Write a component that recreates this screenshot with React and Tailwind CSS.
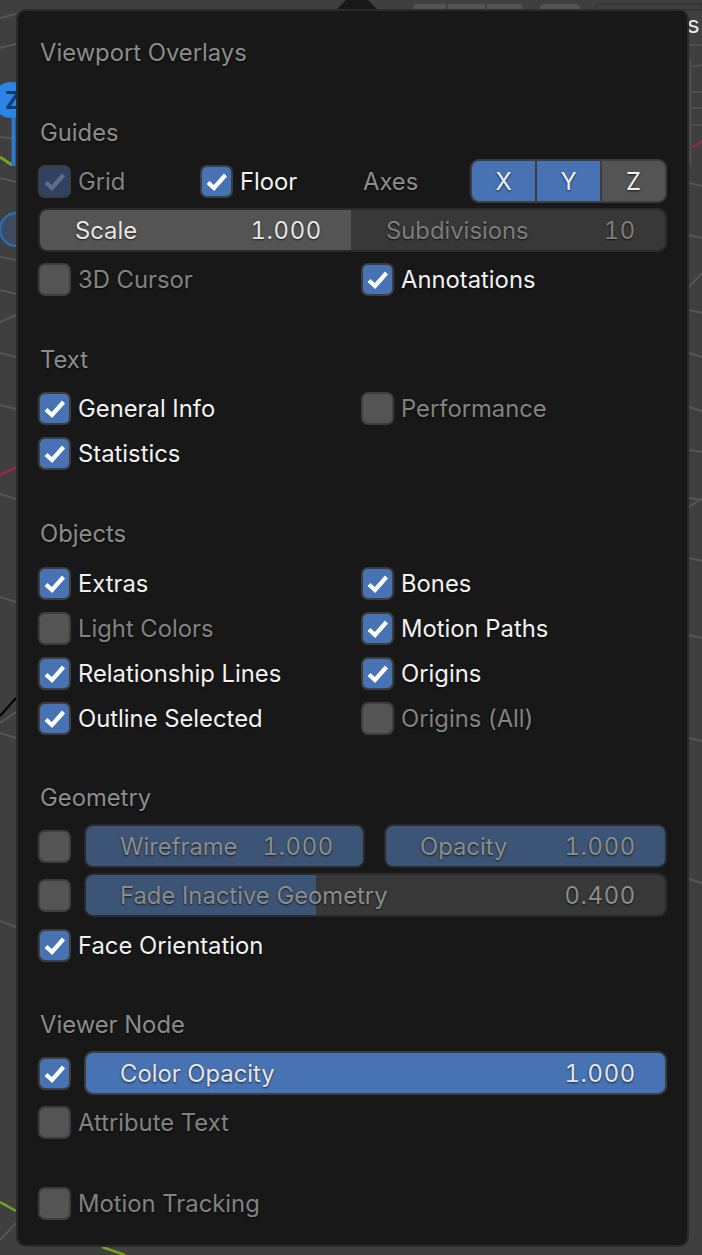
import React from 'react';

const CheckBox = ({ on, dim }) => (
  <div className={`flex h-[33px] w-[33px] shrink-0 items-center justify-center rounded-[7px] border-2 border-[#3d3d3d] ${on ? (dim ? 'bg-[#2f4263]' : 'bg-[#4772b3]') : 'bg-[#545454]'}`}>
    {on && (
      <svg width="29" height="29" viewBox="0 0 29 29" fill="none">
        <path d="M6 15.5 L12 21 L23.5 8" stroke={dim ? '#5f6f87' : '#ffffff'} strokeWidth="4.2" />
      </svg>
    )}
  </div>
);

const Check = ({ label, on, dim, className = '' }) => (
  <div className={`flex h-[34px] items-center gap-[7px] ${className}`}>
    <CheckBox on={on} dim={dim} />
    <span className={`mt-[2px] whitespace-nowrap text-[23.8px] [text-shadow:0_1px_2px_rgba(0,0,0,0.7)] ${on && !dim ? 'text-[#f2f2f2]' : 'text-[#828282]'}`}>{label}</span>
  </div>
);

const Heading = ({ children, className = '' }) => (
  <div className={`flex h-[34px] items-center pl-[2px] text-[23.8px] text-[#8c8c8c] [text-shadow:0_1px_2px_rgba(0,0,0,0.7)] ${className}`}>{children}</div>
);

const CheckPair = ({ left, right, className = '' }) => (
  <div className={`grid grid-cols-[323px_1fr] ${className}`}>
    <Check {...left} />
    {right ? <Check {...right} /> : <div />}
  </div>
);

const Slider = ({ label, value, fill, active, className = '' }) => (
  <div className={`relative h-[44px] overflow-hidden rounded-[9px] border-2 ${active ? 'border-[#3d3d3d]' : 'border-[#2a2a2a]'} bg-[#383838] ${className}`}>
    <div className={`absolute inset-y-0 left-0 ${active ? 'bg-[#4772b3]' : 'bg-[#3c5476]'}`} style={{ width: fill }} />
    <div className={`relative flex h-full items-center justify-between pl-[34px] pr-[29px] pt-[2px] text-[23.8px] [text-shadow:0_1px_2px_rgba(0,0,0,0.7)] ${active ? 'text-[#e6e6e6]' : 'text-[#8c8c8c]'}`}>
      <span className="whitespace-nowrap">{label}</span>
      <span className="tabular-nums tracking-[0.7px]">{value}</span>
    </div>
  </div>
);

const Viewport = () => (
  <svg className="absolute inset-0" width="702" height="1255" viewBox="0 0 702 1255" fill="none">
    <g stroke="#565656" strokeWidth="2">
      <path d="M0 18 L16 14 M0 48 L16 44 M0 137 L16 139 M0 178 L16 182 M0 257 L16 260 M0 290 L16 294 M0 322 L16 315 M0 353 L16 357 M0 405 L16 409" />
      <path d="M0 494 L16 499 M0 597 L16 602 M0 723 L16 712 M0 733 L16 738 M0 921 L16 927 M0 1240 L16 1223" />
      <path d="M689 183 L702 186 M689 235 L702 238 M689 287 L702 273 M689 310 L702 313 M689 353 L702 357 M689 407 L702 411" />
      <path d="M689 450 L702 452 M689 498 L702 500 M689 507 L702 498 M689 558 L702 561 M689 635 L702 638 M689 738 L702 741 M689 879 L702 883" />
      <path d="M690 67 L702 65 M690 92 L702 92 M690 108 L702 108 M690 125 L702 125" strokeWidth="1.5" />
    </g>
    <path d="M690 60 V165" stroke="#4d4d4d" strokeWidth="3" />
    <path d="M689 45 H702" stroke="#4f4f4f" strokeWidth="2" />
    <path d="M0 475 L16 467" stroke="#a0293f" strokeWidth="2" />
    <path d="M692 148 L702 141" stroke="#a0293f" strokeWidth="2" />
    <path d="M0 716 L16 698" stroke="#000000" strokeWidth="2" />
    <path d="M0 1202 L16 1211 M102 1247 L125 1255" stroke="#6fa81e" strokeWidth="2.5" />
    <path d="M0 157 L12 165" stroke="#6fa81e" strokeWidth="3" />
    <path d="M13.5 115 V166" stroke="#2b78d0" strokeWidth="4" />
    <circle cx="11" cy="100" r="18" fill="#2b84e6" />
    <circle cx="16.5" cy="229.5" r="16.5" fill="#3e4c60" stroke="#2b6cb5" strokeWidth="2.5" />
    <path d="M336 10 L346 0 H368 L378 10 Z" fill="#181818" />
    <g fill="#545454">
      <path d="M413 10 V8 Q413 4 418 4 H446 V10 Z" />
      <rect x="448" y="4" width="37" height="6" />
      <path d="M487 10 V4 H518 Q523 4 523 8 V10 Z" />
      <path d="M540 10 V8 Q540 4 545 4 H575 Q580 4 580 8 V10 Z" />
    </g>
    <path d="M596 10 V8 Q596 4 601 4 H702 V10 Z" fill="#3f3f3f" stroke="#333333" strokeWidth="1.5" />
  </svg>
);

const App = () => {
  return (
    <div className="relative h-[1255px] w-[702px] overflow-hidden bg-[#3f3f3f] font-['Inter',sans-serif]">
      <Viewport />
      {/* axis letter on the gizmo and the cut-off button text behind the popover */}
      <div className="absolute left-[5px] top-[88px] text-[24px] font-bold leading-[26px] text-[#123a6b]">Z</div>
      <div className="absolute left-[687px] top-[15px] text-[24px] leading-[20px] text-[#e6e6e6]">s</div>

      <div className="absolute left-[16px] top-[9px] h-[1238px] w-[673px] rounded-[10px] border-2 border-[#2b2b2b] bg-[#181818] px-[20px] pt-[25px]">
        <Heading>Viewport Overlays</Heading>

        <Heading className="mt-[46px]">Guides</Heading>
        <div className="mt-[9px] flex h-[44px] items-center">
          <Check label="Grid" on dim className="w-[162px]" />
          <Check label="Floor" on className="w-[163px]" />
          <span className="mt-[2px] w-[107px] text-[23.8px] text-[#8c8c8c] [text-shadow:0_1px_2px_rgba(0,0,0,0.7)]">Axes</span>
          <div className="flex h-[44px] flex-1 gap-[2px] overflow-hidden rounded-[9px] border-2 border-[#3d3d3d] bg-[#3d3d3d] pt-0 text-[23.8px] text-[#f2f2f2] [text-shadow:0_1px_2px_rgba(0,0,0,0.7)]">
            <div className="flex flex-1 items-center justify-center bg-[#4772b3] pt-[2px]">X</div>
            <div className="flex flex-1 items-center justify-center bg-[#4772b3] pt-[2px]">Y</div>
            <div className="flex flex-1 items-center justify-center bg-[#545454] pt-[2px]">Z</div>
          </div>
        </div>
        <div className="mt-[5px] flex h-[44px] overflow-hidden rounded-[9px] border-2 border-[#2a2a2a] text-[23.8px] [text-shadow:0_1px_2px_rgba(0,0,0,0.7)]">
          <div className="flex w-[311px] items-center justify-between bg-[#545454] pl-[35px] pr-[29px] pt-[2px] text-[#e6e6e6]">
            <span>Scale</span><span className="tabular-nums tracking-[0.7px]">1.000</span>
          </div>
          <div className="flex flex-1 items-center justify-between bg-[#383838] pl-[35px] pr-[29px] pt-[2px] text-[#7d7d7d]">
            <span>Subdivisions</span><span className="tabular-nums tracking-[0.7px]">10</span>
          </div>
        </div>
        <CheckPair className="mt-[10px]" left={{ label: '3D Cursor' }} right={{ label: 'Annotations', on: true }} />

        <Heading className="mt-[47px]">Text</Heading>
        <CheckPair className="mt-[14px]" left={{ label: 'General Info', on: true }} right={{ label: 'Performance' }} />
        <CheckPair className="mt-[11px]" left={{ label: 'Statistics', on: true }} />

        <Heading className="mt-[47px]">Objects</Heading>
        <CheckPair className="mt-[15px]" left={{ label: 'Extras', on: true }} right={{ label: 'Bones', on: true }} />
        <CheckPair className="mt-[11px]" left={{ label: 'Light Colors' }} right={{ label: 'Motion Paths', on: true }} />
        <CheckPair className="mt-[11px]" left={{ label: 'Relationship Lines', on: true }} right={{ label: 'Origins', on: true }} />
        <CheckPair className="mt-[11px]" left={{ label: 'Outline Selected', on: true }} right={{ label: 'Origins (All)' }} />

        <Heading className="mt-[46px]">Geometry</Heading>
        <div className="mt-[9px] flex items-center gap-[13px]">
          <CheckBox />
          <Slider label="Wireframe" value="1.000" fill="100%" className="w-[281px]" />
          <Slider label="Opacity" value="1.000" fill="100%" className="ml-[6px] flex-1" />
        </div>
        <div className="mt-[5px] flex items-center gap-[13px]">
          <CheckBox />
          <Slider label="Fade Inactive Geometry" value="0.400" fill="39.7%" className="flex-1" />
        </div>
        <Check label="Face Orientation" on className="mt-[11px]" />

        <Heading className="mt-[46px]">Viewer Node</Heading>
        <div className="mt-[9px] flex items-center gap-[13px]">
          <CheckBox on />
          <Slider label="Color Opacity" value="1.000" fill="100%" active className="flex-1" />
        </div>
        <Check label="Attribute Text" className="mt-[10px]" />

        <Check label="Motion Tracking" className="mt-[47px]" />
      </div>
    </div>
  );
};

export default App;
